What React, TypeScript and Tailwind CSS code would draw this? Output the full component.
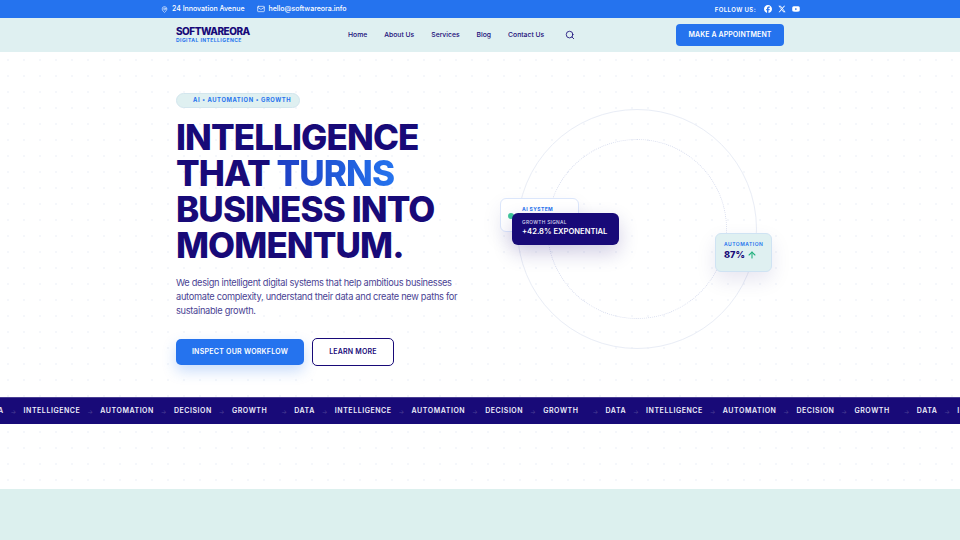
import { ArrowUp, Mail, MapPin, Search } from "lucide-react";
import { FaFacebook, FaXTwitter, FaYoutube } from "react-icons/fa6";

const navLinks = ["Home", "About Us", "Services", "Blog", "Contact Us"];
const tickerWords = ["INTELLIGENCE", "AUTOMATION", "DECISION", "GROWTH", "DATA"];

const TopBar = () => {
  return (
    <div className="h-[18px] bg-[#2573ee] text-white">
      <div className="mx-auto flex h-full w-[640px] items-center justify-between pl-[1px]">
        <div className="flex items-center gap-3 text-[7px] font-medium">
          <span className="flex items-center gap-[4px]">
            <MapPin size={7} />
            24 Innovation Avenue
          </span>
          <span className="flex items-center gap-[4px]">
            <Mail size={8} />
            hello@softwareora.info
          </span>
        </div>
        <div className="flex items-center gap-[6px]">
          <span className="mr-[2px] text-[6px] font-semibold tracking-[0.4px]">FOLLOW US:</span>
          <FaFacebook size={8} />
          <FaXTwitter size={8} />
          <FaYoutube size={8} />
        </div>
      </div>
    </div>
  );
};

const Header = () => {
  return (
    <header className="h-[34px] bg-[#dff0f1]">
      <div className="mx-auto flex h-full w-[608px] items-center">
        <div className="w-[172px]">
          <div className="text-[10px] leading-[11px] font-extrabold tracking-[-0.5px] text-[#180a78]">SOFTWAREORA</div>
          <div className="text-[5px] leading-[7px] font-bold tracking-[0.45px] text-[#2573ee]">DIGITAL INTELLIGENCE</div>
        </div>
        <nav className="flex flex-1 items-center gap-[17px] text-[6.8px] font-medium text-[#180a78]">
          {navLinks.map((link) => (
            <a key={link}>{link}</a>
          ))}
          <Search size={10} className="ml-[4px]" />
        </nav>
        <button className="h-[22px] w-[108px] rounded-[4px] bg-[#2573ee] text-[7px] font-semibold tracking-[0.1px] text-white">
          MAKE A APPOINTMENT
        </button>
      </div>
    </header>
  );
};

const HeroVisual = () => {
  return (
    <div className="relative h-[240px] w-[272px] shrink-0">
      <div className="absolute top-0 left-[17px] size-[240px] rounded-full border border-[#e9edf6]"></div>
      <div className="absolute top-[30px] left-[47px] size-[180px] rounded-full border border-dotted border-[#d9deef]"></div>
      <div className="absolute top-[89px] left-0 h-[34px] w-[79px] rounded-[6px] border border-[#dbe6fb] bg-white shadow-[0_8px_20px_rgba(24,10,120,0.08)]">
        <span className="absolute top-[14px] left-[7px] size-[6px] rounded-full bg-[#3fc79a]"></span>
        <span className="absolute top-[7px] left-[21px] text-[5px] leading-[6px] font-bold tracking-[0.4px] text-[#2573ee]">AI SYSTEM</span>
      </div>
      <div className="absolute top-[104px] left-[12px] h-[32px] w-[107px] rounded-[6px] bg-[#180a78] pt-[6px] pl-[10px] text-white shadow-[0_8px_20px_rgba(24,10,120,0.2)]">
        <div className="text-[4.8px] leading-[7px] font-medium tracking-[0.3px] text-[#d5d5ee]">GROWTH SIGNAL</div>
        <div className="text-[7.6px] leading-[12px] font-semibold whitespace-nowrap">+42.8% EXPONENTIAL</div>
      </div>
      <div className="absolute top-[124px] left-[215px] h-[39px] w-[57px] rounded-[6px] border border-[#cfe3f3] bg-[#dff0f1] pt-[6px] pl-[8px] shadow-[0_8px_20px_rgba(24,10,120,0.1)]">
        <div className="text-[5px] leading-[8px] font-semibold tracking-[0.5px] text-[#2573ee]">AUTOMATION</div>
        <div className="flex items-center gap-[2px] text-[9.2px] leading-[13px] font-extrabold text-[#180a78]">
          87%
          <ArrowUp size={10} strokeWidth={2.6} className="text-[#22b07d]" />
        </div>
      </div>
    </div>
  );
};

const Hero = () => {
  return (
    <section className="h-[345px] bg-white bg-[radial-gradient(circle,#f5f7fb_1px,transparent_1px)] bg-[size:16px_16px]">
      <div className="mx-auto flex h-full w-[608px] justify-between pr-[12px]">
        <div className="w-[300px] pt-[41px]">
          <div className="flex h-[15px] w-[124px] items-center rounded-full border border-[#d3e6ee] bg-[#dff0f1] pl-[16px] text-[5.8px] font-bold tracking-[0.6px] text-[#2573ee]">
            AI • AUTOMATION • GROWTH
          </div>
          <h1 className="mt-[11px] text-[35px] leading-[36px] font-extrabold tracking-[-0.9px] text-[#180a78]">
            INTELLIGENCE
            <br />
            THAT{" "}
            <span className="bg-gradient-to-r from-[#1f3fc4] to-[#2573ee] bg-clip-text text-transparent">TURNS</span>
            <br />
            BUSINESS INTO
            <br />
            MOMENTUM.
          </h1>
          <p className="mt-[13px] w-[285px] text-[9.25px] leading-[14px] tracking-[-0.3px] text-[#4a3f93]">
            We design intelligent digital systems that help ambitious businesses automate complexity, understand their data and create new paths for sustainable growth.
          </p>
          <div className="mt-[20px] flex items-center gap-2">
            <button className="h-[26px] w-[128px] rounded-[5px] bg-[#2573ee] text-[7px] font-semibold tracking-[0.25px] text-white shadow-[0_6px_14px_rgba(37,115,238,0.25)]">
              INSPECT OUR WORKFLOW
            </button>
            <button className="h-[28px] w-[82px] rounded-[5px] border border-[#180a78] bg-white text-[7px] font-semibold tracking-[0.2px] text-[#180a78]">
              LEARN MORE
            </button>
          </div>
        </div>
        <div className="pt-[57px]">
          <HeroVisual />
        </div>
      </div>
    </section>
  );
};

const Ticker = () => {
  const words = [...tickerWords, ...tickerWords, ...tickerWords, ...tickerWords];
  return (
    <div className="flex h-[27px] items-center overflow-hidden border-t border-[#4a3f93] bg-[#180a78] text-[7px] font-semibold tracking-[0.55px] text-[#eeeefb]">
      <div className="-ml-[17px] flex shrink-0 items-center">
        <span className="shrink-0">DATA</span>
        {words.map((word, i) => (
          <span key={i} className="flex shrink-0 items-center">
            <span className="w-[20px] text-center text-[6px] font-normal text-[#4a3f93]">→</span>
            {word}
            {word === "GROWTH" && <span className="w-[7px]"></span>}
          </span>
        ))}
      </div>
    </div>
  );
};

export default function App() {
  return (
    <div className="h-[540px] w-[960px] overflow-hidden bg-white font-['Inter',sans-serif]">
      <TopBar />
      <Header />
      <Hero />
      <Ticker />
      <div className="h-[65px] bg-white bg-[radial-gradient(circle,#f5f7fb_1px,transparent_1px)] bg-[size:16px_16px]"></div>
      <div className="h-[51px] bg-[#dcf0ee]"></div>
    </div>
  );
}
